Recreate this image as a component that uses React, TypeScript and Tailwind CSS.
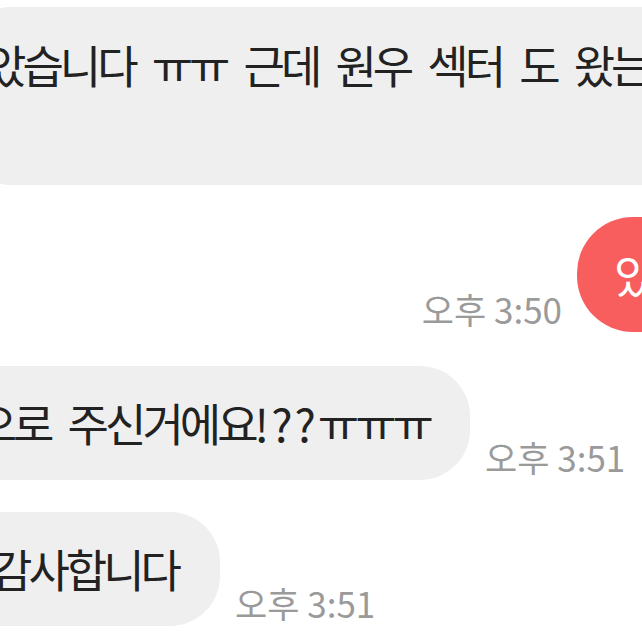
import React from "react";

const font = { fontFamily: '"Noto Sans CJK KR", "Noto Sans", sans-serif' };

function Time({ t }: { t: string }) {
  return (
    <div className="shrink-0 whitespace-nowrap pb-[1px] text-[35px] leading-[44px] text-[#9a9a9a]">
      {t}
    </div>
  );
}

const msg = "whitespace-nowrap text-[45px] tracking-[-4px] [word-spacing:11px]";

export default function App() {
  return (
    <div
      className="relative h-[642px] w-[642px] overflow-hidden bg-white"
      style={font}
    >
      <div className="pt-[7px]">
        <div className="ml-[-30px] h-[178px] w-[720px] overflow-hidden rounded-[40px] bg-[#efefef] pt-[23px]">
          <div className={`ml-[15px] leading-[70px] text-[#222222] ${msg}`}>
            았습니다 ㅠㅠ 근데 원우 섹터 도 왔는데요
          </div>
        </div>
      </div>

      <div className="mt-[32px] flex items-end justify-end gap-[15px]">
        <Time t="오후 3:50" />
        <div className="mr-[-60px] flex h-[115px] w-[125px] shrink-0 items-center rounded-[56px] bg-[#f95e5e] pl-[37px]">
          <span className={`text-white ${msg}`}>있</span>
        </div>
      </div>

      <div className="mt-[34px] flex items-end gap-[15px]">
        <div className="flex w-[470px] shrink-0 justify-end">
          <div className="flex h-[114px] shrink-0 items-center rounded-[50px] bg-[#efefef] pl-[45px] pr-[40px]">
            <span className={`text-[#222222] ${msg}`}>
              으로 주신거에요<span className="tracking-[2px]">!??</span>ㅠㅠㅠ
            </span>
          </div>
        </div>
        <Time t="오후 3:51" />
      </div>

      <div className="mt-[32px] flex items-end gap-[15px]">
        <div className="flex w-[220px] shrink-0 justify-end">
          <div className="flex h-[114px] shrink-0 items-center rounded-[50px] bg-[#efefef] pl-[45px] pr-[42px]">
            <span className={`text-[#222222] ${msg} tracking-[-2px]`}>감사합니다</span>
          </div>
        </div>
        <Time t="오후 3:51" />
      </div>
    </div>
  );
}
